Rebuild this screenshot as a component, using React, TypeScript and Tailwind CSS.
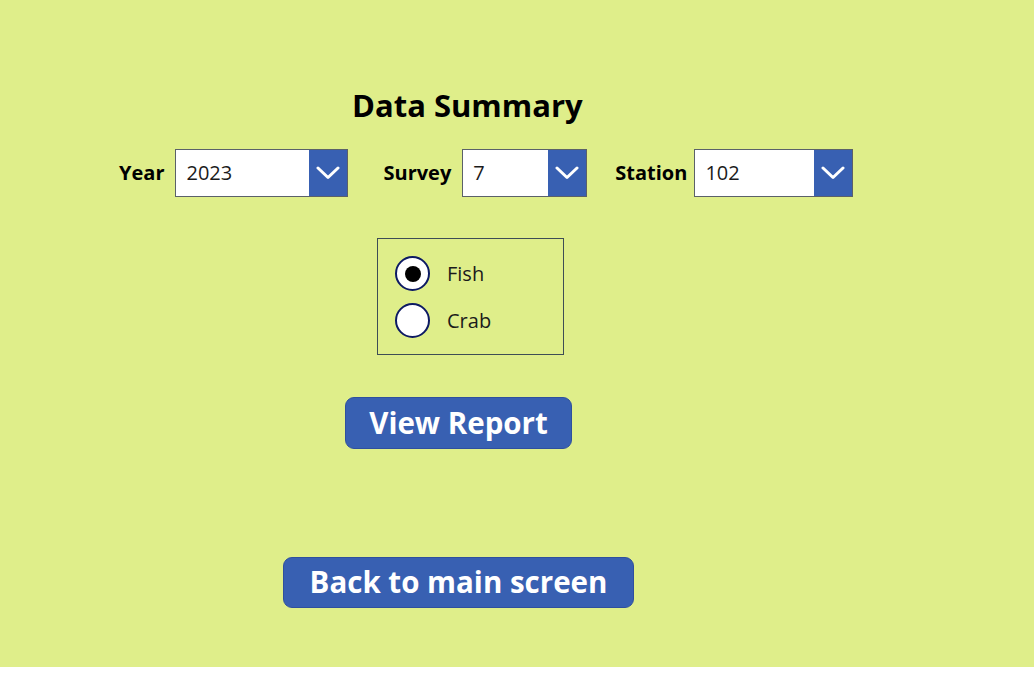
import React from "react";

const FONT = { fontFamily: '"Open Sans", "Liberation Sans", sans-serif' };

function Chevron() {
  return (
    <svg width="24" height="14" viewBox="0 0 24 14" fill="none">
      <path d="M2 2 L12 11.5 L22 2" stroke="white" strokeWidth="3" strokeLinecap="round" strokeLinejoin="round" />
    </svg>
  );
}

interface DropdownProps {
  value: string;
  width: string;
}

function Dropdown({ value, width }: DropdownProps) {
  return (
    <div className={`flex h-[48px] ${width} border border-[#5b6169] bg-white`}>
      <div className="flex flex-1 items-center pl-[10px] text-[20px] text-[#1b1b1b]">{value}</div>
      <div className="flex w-[38px] items-center justify-center bg-[#3860B2]">
        <Chevron />
      </div>
    </div>
  );
}

function Radio({ label, checked }: { label: string; checked?: boolean }) {
  return (
    <div className="flex h-[35px] items-center">
      <div className="flex h-[35px] w-[35px] items-center justify-center rounded-full border-2 border-[#0d1a63] bg-white">
        {checked && <div className="h-[16px] w-[16px] rounded-full bg-black" />}
      </div>
      <span className="ml-[17px] text-[20px] text-[#1b1b1b]">{label}</span>
    </div>
  );
}

export default function App() {
  return (
    <div style={FONT} className="flex h-[667px] w-full flex-col bg-[#DFEE8A]">
      <h1 className="ml-[352px] mt-[85px] text-[31px] font-bold leading-[40px] text-black">Data Summary</h1>

      <div className="mt-[24px] flex items-center">
        <span className="ml-[119px] text-[20px] font-bold text-black">Year</span>
        <div className="ml-[11px]">
          <Dropdown value="2023" width="w-[173px]" />
        </div>
        <span className="ml-[35px] text-[20px] font-bold text-black">Survey</span>
        <div className="ml-[11px]">
          <Dropdown value="7" width="w-[125px]" />
        </div>
        <span className="ml-[28px] text-[20px] font-bold text-black">Station</span>
        <div className="ml-[7px]">
          <Dropdown value="102" width="w-[159px]" />
        </div>
      </div>

      <div className="ml-[377px] mt-[41px] flex h-[117px] w-[187px] flex-col gap-[12px] border border-[#3e4d55] pl-[17px] pt-[17px]">
        <Radio label="Fish" checked />
        <Radio label="Crab" />
      </div>

      <button className="ml-[345px] mt-[42px] flex h-[52px] w-[227px] items-center justify-center rounded-[9px] border border-[#2f509e] bg-[#3860B2] text-[29.5px] font-bold text-white">
        View Report
      </button>

      <button className="ml-[283px] mt-[108px] flex h-[51px] w-[351px] items-center justify-center rounded-[9px] border border-[#2f509e] bg-[#3860B2] text-[29.5px] font-bold text-white">
        Back to main screen
      </button>
    </div>
  );
}
